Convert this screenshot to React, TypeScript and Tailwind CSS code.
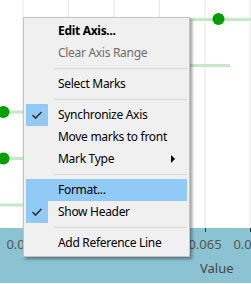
import React from 'react';

const grid = [23, 68.5, 114, 159.5, 205, 250];

// labels hidden under the menu are left out
const labels = [
  { x: 23, label: '0.045' },
  { x: 205, label: '0.065' },
  { x: 250, label: '0.070' },
];

type Item =
  | { kind: 'sep' }
  | { kind: 'item'; label: string; bold?: boolean; disabled?: boolean; checked?: boolean; active?: boolean; sub?: boolean };

const items: Item[] = [
  { kind: 'item', label: 'Edit Axis...', bold: true },
  { kind: 'item', label: 'Clear Axis Range', disabled: true },
  { kind: 'sep' },
  { kind: 'item', label: 'Select Marks' },
  { kind: 'sep' },
  { kind: 'item', label: 'Synchronize Axis', checked: true },
  { kind: 'item', label: 'Move marks to front' },
  { kind: 'item', label: 'Mark Type', sub: true },
  { kind: 'sep' },
  { kind: 'item', label: 'Format...', active: true },
  { kind: 'item', label: 'Show Header', checked: true },
  { kind: 'sep' },
  { kind: 'item', label: 'Add Reference Line' },
];

function Chart() {
  return (
    <svg width="251" height="228" className="block">
      {grid.map((x) => (
        <line key={x} x1={x} x2={x} y1={0} y2={228} stroke="#e6e6e6" strokeWidth={1} />
      ))}
      {/* bars */}
      <line x1={150} x2={251} y1={19.5} y2={19.5} stroke="#c6e8c4" strokeWidth={3} />
      <line x1={150} x2={230} y1={65.5} y2={65.5} stroke="#c6e8c4" strokeWidth={3} />
      <line x1={0} x2={60} y1={112} y2={112} stroke="#c6e8c4" strokeWidth={3} />
      <line x1={0} x2={60} y1={158.5} y2={158.5} stroke="#c6e8c4" strokeWidth={3} />
      <line x1={0} x2={60} y1={205} y2={205} stroke="#c6e8c4" strokeWidth={3} />
      {/* marks */}
      <circle cx={218.5} cy={19} r={6} fill="#00a000" />
      <circle cx={3.5} cy={112} r={6} fill="#00a000" />
      <circle cx={3.5} cy={158.5} r={6} fill="#00a000" />
    </svg>
  );
}

function Axis() {
  return (
    <div className="relative h-[55px] bg-[#8cc3d2] font-['Noto_Sans',sans-serif]">
      <svg width="251" height="6" className="absolute left-0 top-0">
        {grid.map((x) => (
          <line key={x} x1={Math.floor(x) + 0.5} x2={Math.floor(x) + 0.5} y1={0} y2={4} stroke="#333" strokeWidth={1} />
        ))}
      </svg>
      {labels.map((t) => (
        <span
          key={t.label}
          className="absolute top-[7px] -translate-x-1/2 text-[13px] leading-[18px] text-[#555]"
          style={{ left: t.x }}
        >
          {t.label}
        </span>
      ))}
      <span className="absolute left-[200px] top-[31px] text-[13px] leading-[18px] text-[#444]">Value</span>
    </div>
  );
}

function Check() {
  return (
    <svg width="12" height="10" viewBox="0 0 12 10">
      <path d="M1.5 5 L4.5 8 L10.5 2" fill="none" stroke="#333" strokeWidth={1.6} />
    </svg>
  );
}

function Menu() {
  return (
    <div className="absolute left-[23px] top-[17px] w-[167px] border border-[#c4c4c4] bg-[#f0f0f0] p-[2px] shadow-[2px_2px_3px_rgba(0,0,0,0.4)] font-['Noto_Sans',sans-serif] text-[12px] tracking-[-0.3px]">
      {items.map((it, i) =>
        it.kind === 'sep' ? (
          <div key={i} className="flex h-[9px] items-center pl-[28px]">
            <div className="h-px w-full bg-[#d7d7d7]" />
          </div>
        ) : (
          <div
            key={i}
            className={`relative flex h-[22px] items-center ${it.active ? 'bg-[#91c9f7]' : ''}`}
          >
            <div className={`flex h-[22px] w-[22px] items-center justify-center ${it.checked ? 'bg-[#91c9f7]' : ''}`}>
              {it.checked && <Check />}
            </div>
            <span
              className={`ml-[10px] leading-none ${it.bold ? 'font-bold text-black' : ''} ${
                it.disabled ? 'text-[#6d6d6d]' : 'text-black'
              }`}
            >
              {it.label}
            </span>
            {it.sub && (
              <span className="absolute right-[12px] top-[7px] h-0 w-0 border-y-[4px] border-l-[4px] border-y-transparent border-l-black" />
            )}
          </div>
        )
      )}
    </div>
  );
}

export default function App() {
  return (
    <div className="relative h-[284px] w-[251px] overflow-hidden bg-white">
      <div className="flex flex-col">
        <Chart />
        <Axis />
        <div className="h-px bg-white" />
      </div>
      <Menu />
    </div>
  );
}
